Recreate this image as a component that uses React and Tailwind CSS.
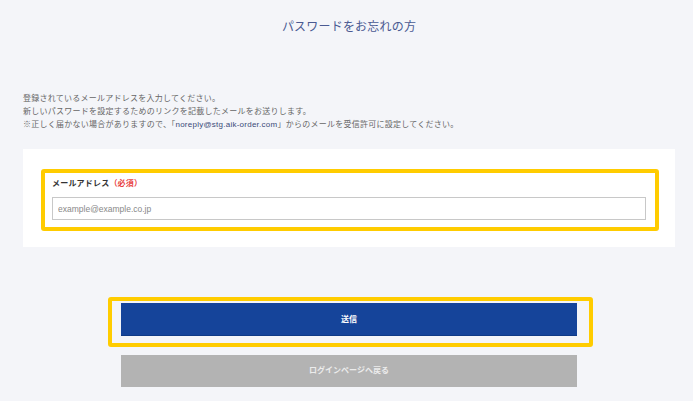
import React from 'react'

const notes = [
  '登録されているメールアドレスを入力してください。',
  '新しいパスワードを設定するためのリンクを記載したメールをお送りします。',
]

export default function App() {
  return (
    <div
      className="min-h-[401px] w-[693px] bg-[#f4f5f9] text-[#333]"
      style={{ fontFamily: '"Liberation Sans", "Noto Sans CJK JP", sans-serif' }}
    >
      <div className="ml-[23px] w-[652px]">
        <h1 className="pt-[20px] text-center text-[12px] leading-[14px] tracking-[0.2px] text-[#4a5a92]">
          パスワードをお忘れの方
        </h1>

        <div className="mt-[58px] text-[8px] leading-[13px] tracking-[0.25px] text-[#666]">
          {notes.map((t) => (
            <p key={t}>{t}</p>
          ))}
          <p>
            ※正しく届かない場合がありますので、「<span className="text-[#3a4a78]">noreply@stg.aik-order.com</span>」からのメールを受信許可に設定してください。
          </p>
        </div>

        <div className="mt-[18px] h-[98px] bg-white px-[29px] pt-[29px]">
          <div className="relative">
            <div className="pointer-events-none absolute -top-[9px] -left-[11px] -right-[13px] -bottom-[11px] rounded-[3px] border-4 border-[#ffcc00]" />
            <label className="block text-[8px] font-bold leading-[12px] tracking-[0.2px] text-[#333]">
              メールアドレス<span className="text-[#e8423f]">（必須）</span>
            </label>
            <input
              type="email"
              placeholder="example@example.co.jp"
              className="mt-[7px] block h-[23px] w-full border border-[#c8c8c8] bg-white px-[5px] text-[8.5px] text-[#333] placeholder:text-[#888] outline-none"
            />
          </div>
        </div>

        <div className="mx-auto mt-[56px] flex w-[456px] flex-col gap-[19px]">
          <div className="relative">
            <div className="pointer-events-none absolute -top-[6px] -left-[13px] -right-[16px] -bottom-[11px] rounded-[3px] border-4 border-[#ffcc00]" />
            <button className="block h-[33px] w-full border-b border-[#0f3a86] bg-[#15449a] pt-[2px] text-[8px] font-bold text-white">
              送信
            </button>
          </div>
          <button className="block h-[32px] w-full bg-[#b3b3b3] text-[8px] font-bold text-[#ececec]">
            ログインページへ戻る
          </button>
        </div>
      </div>
    </div>
  )
}
